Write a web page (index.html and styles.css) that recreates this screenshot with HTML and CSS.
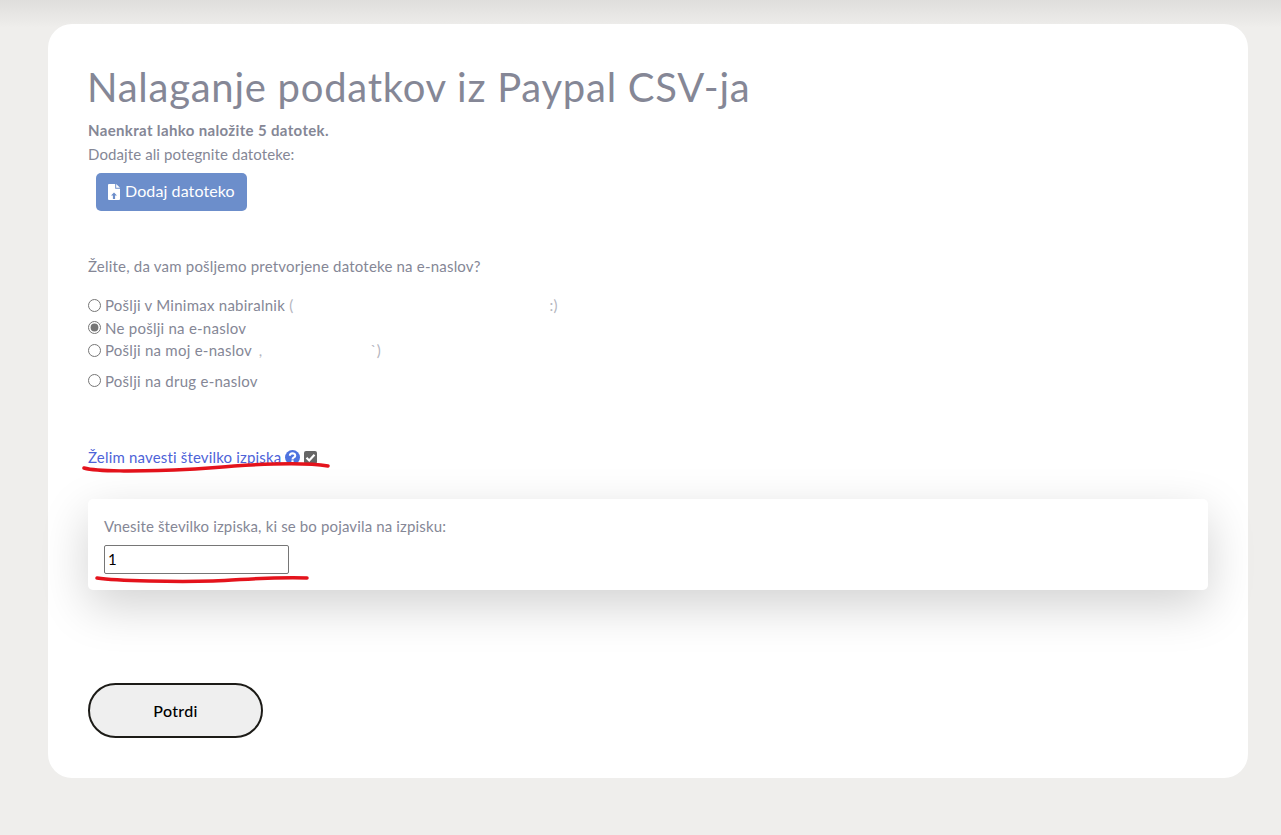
FILE: index.html
```html
<!DOCTYPE html>
<html lang="en">
<head>
    <meta charset="UTF-8">
    <meta name="viewport" content="width=device-width, initial-scale=1.0">
    <title>Nalaganje podatkov</title>
    <link rel="stylesheet" href="styles.css">
</head>
<body>

<div class="page-card">
    <h1 class="page-title">Nalaganje podatkov iz Paypal CSV-ja</h1>
    <div class="upload-note">Naenkrat lahko naložite 5 datotek.</div>
    <div class="upload-hint">Dodajte ali potegnite datoteke:</div>
    <button type="button" class="add-file-btn">
        <svg class="file-icon" viewBox="0 0 12 16" aria-hidden="true">
            <path fill="#fff" d="M0 1a1 1 0 0 1 1-1h6.2v4.8H12V15a1 1 0 0 1-1 1H1a1 1 0 0 1-1-1z"/>
            <path fill="#fff" d="M8.2 0L12 3.8H8.2z"/>
            <path fill="#6c8ecb" d="M6 8.6l3 3H7.1V15H4.9v-3.4H3z"/>
        </svg>
        <span class="add-file-text">Dodaj datoteko</span>
    </button>

    <p class="mail-question">Želite, da vam pošljemo pretvorjene datoteke na e-naslov?</p>

    <!-- Mail options, addresses are blanked out in the original -->
    <div class="mail-options">
        <label class="mail-option">
            <input type="radio" name="mail" class="mail-radio">
            <span>Pošlji v Minimax nabiralnik <span class="blanked blanked-long">(<i></i>:)</span></span>
        </label>
        <label class="mail-option">
            <input type="radio" name="mail" class="mail-radio" checked>
            <span>Ne pošlji na e-naslov</span>
        </label>
        <label class="mail-option">
            <input type="radio" name="mail" class="mail-radio">
            <span>Pošlji na moj e-naslov <span class="blanked blanked-short">,<i></i>`)</span></span>
        </label>
        <label class="mail-option mail-option-last">
            <input type="radio" name="mail" class="mail-radio">
            <span>Pošlji na drug e-naslov</span>
        </label>
    </div>

    <div class="statement-row">
        <a href="#" class="statement-link">Želim navesti številko izpiska</a>
        <svg class="help-icon" viewBox="0 0 16 16" aria-hidden="true">
            <circle cx="8" cy="8" r="8" fill="#4e73df"/>
            <path fill="none" stroke="#fff" stroke-width="2.2" d="M5.2 6.2c0-3.4 5.7-3.4 5.7-.2 0 2-2.9 1.9-2.9 4"/>
            <rect x="6.8" y="11" width="2.4" height="2.4" rx=".4" fill="#fff"/>
        </svg>
        <span class="fake-check">
            <svg viewBox="0 0 12 12" aria-hidden="true">
                <path fill="none" stroke="#fff" stroke-width="2" d="M2.3 6.3l2.5 2.5 4.9-5.4"/>
            </svg>
        </span>
        <svg class="red-mark red-mark-link" viewBox="0 0 248 12" aria-hidden="true">
            <path d="M2 7c14 4 52 3 90 2 30-1 34-2 60-4 30-2 70-4 94 0"/>
        </svg>
    </div>

    <div class="statement-panel">
        <label class="statement-label" for="statement-no">Vnesite številko izpiska, ki se bo pojavila na izpisku:</label>
        <input type="text" id="statement-no" class="statement-input" value="1">
        <svg class="red-mark red-mark-input" viewBox="0 0 214 10" aria-hidden="true">
            <path d="M2 4c20 3 80 4 116 3 30-1 50-4 94-3"/>
        </svg>
    </div>

    <button type="button" class="submit-btn">Potrdi</button>
</div>

</body>
</html>
```

FILE: styles.css
```css
body {
    font-family: "Lato", "Open Sans", sans-serif;
    font-size: 15px;
    color: #858796;
    margin: 0;
    padding: 24px 33px 57px 48px;
    background-color: #efeeec;
    background-image: linear-gradient(#dfdedc, #efeeec 28px);
    background-repeat: no-repeat;
}

.page-card {
    background-color: #fff;
    border-radius: 24px;
    height: 754px;
    box-sizing: border-box;
    padding: 36px 40px 0;
}

.page-title {
    font-size: 40px;
    font-weight: 400;
    line-height: 54px;
    letter-spacing: 0.75px;
    margin: 0 0 4px -1px;
}

.upload-note {
    font-weight: 700;
    line-height: 24px;
    margin-bottom: 1px;
    letter-spacing: 0.35px;
}

.upload-hint {
    line-height: 23px;
    letter-spacing: 0.1px;
}

.add-file-btn {
    display: flex;
    align-items: center;
    gap: 5px;
    margin: 7px 0 0 8px;
    width: 151px;
    height: 38px;
    padding: 0 12px;
    border: none;
    border-radius: 5px;
    background-color: #6c8ecb;
    color: #fff;
    font-family: inherit;
    font-size: 16px;
    letter-spacing: 0.1px;
}

.add-file-text {
    padding-bottom: 3px;
}

.file-icon {
    width: 12px;
    height: 16px;
}

.mail-question {
    margin: 44px 0 17px;
    line-height: 22px;
    letter-spacing: 0.2px;
}

.mail-option {
    display: flex;
    align-items: center;
    height: 22.5px;
    letter-spacing: 0.25px;
}

.mail-option-last {
    margin-top: 8px;
}

.mail-radio {
    width: 13px;
    height: 13px;
    margin: 0 4px 0 0;
    accent-color: #767676;
}

.blanked {
    display: inline-flex;
    color: #b5b6c0;
}

.blanked i {
    display: inline-block;
}

.blanked-long i {
    width: 256px;
}

.blanked-short {
    margin-left: 3px;
}

.blanked-short i {
    width: 108px;
}

.statement-row {
    position: relative;
    display: flex;
    align-items: center;
    gap: 4px;
    margin-top: 54px;
    height: 22px;
}

.statement-link {
    color: #4e63d8;
    text-decoration: none;
    letter-spacing: 0.17px;
}

.help-icon {
    width: 15px;
    height: 15px;
}

.fake-check {
    display: flex;
    width: 13px;
    height: 13px;
    border-radius: 2px;
    background-color: #666;
}

.red-mark {
    position: absolute;
    fill: none;
    stroke: #e4131c;
    stroke-width: 3.5;
    stroke-linecap: round;
}

.red-mark-link {
    left: -6px;
    top: 15px;
    width: 248px;
    height: 12px;
}

.red-mark-input {
    left: 7px;
    bottom: 6px;
    width: 214px;
    height: 10px;
}

.statement-panel {
    position: relative;
    display: flex;
    flex-direction: column;
    align-items: flex-start;
    margin-top: 31px;
    height: 91px;
    box-sizing: border-box;
    padding: 16px;
    background-color: #fff;
    border-radius: 5px;
    box-shadow: 0 16px 48px rgba(0, 0, 0, 0.18);
}

.statement-label {
    line-height: 22px;
    margin-bottom: 8px;
    letter-spacing: 0.14px;
}

.statement-input {
    width: 185px;
    height: 29px;
    box-sizing: border-box;
    padding: 0 3px 2px;
    border: 1px solid #767676;
    border-radius: 2px;
    color: #000;
    font-family: inherit;
    font-size: 15px;
}

.submit-btn {
    display: block;
    margin-top: 93px;
    width: 175px;
    height: 55px;
    border: 2px solid #1c1b17;
    border-radius: 28px;
    background-color: #efefef;
    color: #000;
    font-family: inherit;
    font-size: 16px;
    font-weight: 500;
    letter-spacing: 0.3px;
}
```
